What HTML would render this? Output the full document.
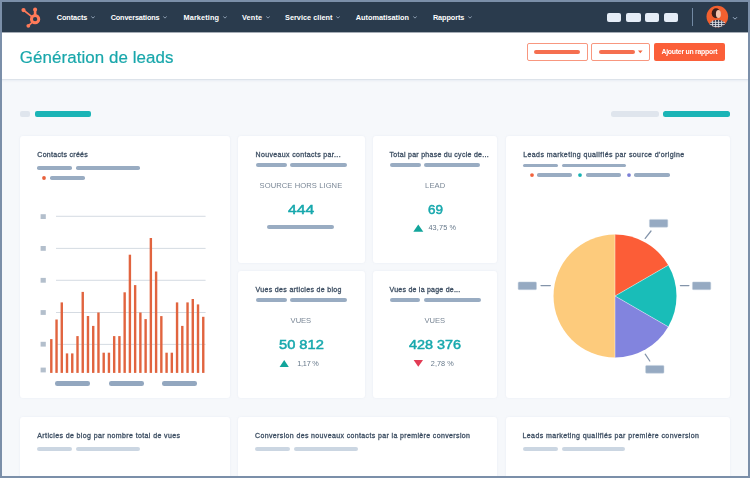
<!DOCTYPE html>
<html lang="fr">
<head>
<meta charset="utf-8">
<title>Génération de leads</title>
<style>
*{box-sizing:border-box;margin:0;padding:0}
html,body{width:750px;height:478px;overflow:hidden;background:#f6f8fb}
body{font-family:"Liberation Sans",sans-serif;position:relative;color:#33475b}
.abs{position:absolute}
#content{position:absolute;left:0;top:0;width:750px;height:478px;overflow:hidden;filter:blur(.4px)}
#nav{position:absolute;left:0;top:0;width:750px;height:33px;background:linear-gradient(to bottom,#2a3b4d 0,#2a3b4d 32px,#a5adb6 32px,#a5adb6 33px)}
#head{position:absolute;left:0;top:33px;width:750px;height:47px;background:#fff;border-bottom:1px solid #dde3ea;box-shadow:0 1px 2px rgba(203,214,226,.35)}
.t{position:absolute;white-space:nowrap}
.nv{color:#fff;font-weight:bold}
.ttl{color:#19a7ab;-webkit-text-stroke:.2px #19a7ab}
.ct{color:#3f5064;-webkit-text-stroke:.3px #3f5064}
.lbl{color:#7a8796}
.num{color:#17a8ad;-webkit-text-stroke:.5px #17a8ad}
.pct{color:#66788a}
.btn{color:#fff;font-weight:bold}
.bar{position:absolute}
.card{position:absolute;background:#fff;border-radius:3px;box-shadow:0 0 2px rgba(200,210,225,.3)}
#frame{position:absolute;left:0;top:0;width:750px;height:478px;border:2px solid #7b8fa9;border-bottom-width:2.2px;pointer-events:none}
</style>
</head>
<body>
<div id="content">
<div id="nav"></div>
<div id="head"></div>
<svg class="abs" style="left:18px;top:4px" width="26" height="26" viewBox="18 4 26 26">
<g fill="none" stroke="#ff7a59" stroke-linecap="round">
<circle cx="35.1" cy="19.2" r="3.65" stroke-width="3"/>
<line x1="35.1" y1="14.5" x2="35.1" y2="10.2" stroke-width="2.6"/>
<line x1="31.8" y1="16.6" x2="24" y2="10.5" stroke-width="1.7"/>
<line x1="32.2" y1="22.4" x2="28.8" y2="25.4" stroke-width="1.7"/>
</g>
<circle cx="35.1" cy="9.6" r="2" fill="#ff7a59"/>
<circle cx="23.5" cy="10.1" r="2.1" fill="#ff7a59"/>
<circle cx="28.3" cy="25.8" r="1.9" fill="#ff7a59"/>
</svg>
<div class="t nv" id="nv0" style="left:56.70px;top:11.27px;font-size:7.30px;line-height:14.60px;letter-spacing:-0.074px;">Contacts</div><svg class="abs" style="left:90.0px;top:15.4px" width="6" height="5" viewBox="0 0 6 5"><path d="M1.3 1.5 L3 3.1 L4.7 1.5" fill="none" stroke="#98a9bd" stroke-width=".9"/></svg><div class="t nv" id="nv1" style="left:110.70px;top:11.27px;font-size:7.30px;line-height:14.60px;letter-spacing:-0.149px;">Conversations</div><svg class="abs" style="left:162.2px;top:15.4px" width="6" height="5" viewBox="0 0 6 5"><path d="M1.3 1.5 L3 3.1 L4.7 1.5" fill="none" stroke="#98a9bd" stroke-width=".9"/></svg><div class="t nv" id="nv2" style="left:183.50px;top:11.27px;font-size:7.30px;line-height:14.60px;letter-spacing:0.129px;">Marketing</div><svg class="abs" style="left:221.6px;top:15.4px" width="6" height="5" viewBox="0 0 6 5"><path d="M1.3 1.5 L3 3.1 L4.7 1.5" fill="none" stroke="#98a9bd" stroke-width=".9"/></svg><div class="t nv" id="nv3" style="left:242.00px;top:11.27px;font-size:7.30px;line-height:14.60px;letter-spacing:0.133px;">Vente</div><svg class="abs" style="left:264.6px;top:15.4px" width="6" height="5" viewBox="0 0 6 5"><path d="M1.3 1.5 L3 3.1 L4.7 1.5" fill="none" stroke="#98a9bd" stroke-width=".9"/></svg><div class="t nv" id="nv4" style="left:285.00px;top:11.27px;font-size:7.30px;line-height:14.60px;letter-spacing:0.034px;">Service client</div><svg class="abs" style="left:335.1px;top:15.4px" width="6" height="5" viewBox="0 0 6 5"><path d="M1.3 1.5 L3 3.1 L4.7 1.5" fill="none" stroke="#98a9bd" stroke-width=".9"/></svg><div class="t nv" id="nv5" style="left:355.80px;top:11.27px;font-size:7.30px;line-height:14.60px;letter-spacing:0.007px;">Automatisation</div><svg class="abs" style="left:411.6px;top:15.4px" width="6" height="5" viewBox="0 0 6 5"><path d="M1.3 1.5 L3 3.1 L4.7 1.5" fill="none" stroke="#98a9bd" stroke-width=".9"/></svg><div class="t nv" id="nv6" style="left:432.90px;top:11.27px;font-size:7.30px;line-height:14.60px;letter-spacing:-0.090px;">Rapports</div><svg class="abs" style="left:466.9px;top:15.4px" width="6" height="5" viewBox="0 0 6 5"><path d="M1.3 1.5 L3 3.1 L4.7 1.5" fill="none" stroke="#98a9bd" stroke-width=".9"/></svg>
<div class="abs" style="left:607.1px;top:12.8px;width:14.3px;height:9.2px;border-radius:2px;background:#e5edf7"></div><div class="abs" style="left:626.3px;top:12.8px;width:14.3px;height:9.2px;border-radius:2px;background:#e5edf7"></div><div class="abs" style="left:645.0px;top:12.8px;width:14.3px;height:9.2px;border-radius:2px;background:#e5edf7"></div><div class="abs" style="left:664.0px;top:12.8px;width:14.3px;height:9.2px;border-radius:2px;background:#e5edf7"></div><div class="abs" style="left:692px;top:8px;width:1px;height:17.5px;background:#7289a3"></div><svg class="abs" style="left:704px;top:3px" width="28" height="28" viewBox="704 3 28 28">
<defs><clipPath id="av"><circle cx="717.3" cy="16.6" r="10.8"/></clipPath></defs>
<circle cx="717.3" cy="16.6" r="10.8" fill="#f2602f"/>
<g clip-path="url(#av)">
<ellipse cx="716" cy="13.2" rx="4.3" ry="5" fill="#3a1f1c"/>
<ellipse cx="718.4" cy="14" rx="2.5" ry="4" fill="#f0c3ae"/>
<path d="M709 29 C709 22 712.5 20 717.5 20 C722.6 20 726 22 726 29 Z" fill="#2a3248"/>
<g stroke="#eef1f6" stroke-width=".9" opacity=".92"><path d="M710.5 22.3 H725 M709 24.6 H727 M709 26.6 H727 M712.6 20.5 V28 M715.6 20 V28 M718.6 20 V28 M721.6 20.5 V28"/></g>
</g>
</svg>
<svg class="abs" style="left:732.2px;top:16.2px" width="6" height="5" viewBox="0 0 6 5"><path d="M1 1.2 L3 3.2 L5 1.2" fill="none" stroke="#9fb2c9" stroke-width="1"/></svg>
<div class="t ttl" id="ttl" style="left:19.80px;top:40.54px;font-size:16.90px;line-height:33.80px;letter-spacing:0.087px;">Génération de leads</div><div class="abs" style="left:526.5px;top:43.2px;width:61.5px;height:17.6px;border:1px solid #f8977f;border-radius:2px;background:#fff"></div><div class="bar" style="left:534.0px;top:49.7px;width:46.0px;height:4.4px;border-radius:2.2px;background:#f56f50;"></div><div class="abs" style="left:591px;top:43.2px;width:58.7px;height:17.6px;border:1px solid #f8977f;border-radius:2px;background:#fff"></div><div class="bar" style="left:599.0px;top:49.7px;width:36.2px;height:4.4px;border-radius:2.2px;background:#f56f50;"></div><svg class="abs" style="left:636.5px;top:50px" width="7" height="4" viewBox="0 0 7 4"><path d="M1 0.6 H5.6 L3.3 3.2 Z" fill="#f2663f"/></svg><div class="abs" style="left:654.4px;top:43.2px;width:70.4px;height:17.4px;border-radius:2px;background:#fb5f39"></div><div class="t btn" id="btn" style="left:661.50px;top:45.01px;font-size:6.90px;line-height:13.80px;letter-spacing:-0.258px;">Ajouter un rapport</div>
<div class="bar" style="left:19.5px;top:110.9px;width:10.9px;height:6.1px;border-radius:3.0px;background:#dfe5ed;border-radius:2px;"></div><div class="bar" style="left:35.1px;top:110.9px;width:56.4px;height:6.1px;border-radius:3.0px;background:#1bb4b6;border-radius:2px;"></div><div class="bar" style="left:611.0px;top:110.9px;width:47.5px;height:6.1px;border-radius:3.0px;background:#dfe5ed;border-radius:2.5px;"></div><div class="bar" style="left:662.9px;top:110.9px;width:67.4px;height:6.1px;border-radius:3.0px;background:#1bb4b6;border-radius:2.5px;"></div>
<div class="card" style="left:20.0px;top:136.0px;width:209.5px;height:262.0px"></div><div class="card" style="left:238.0px;top:136.0px;width:127.0px;height:127.0px"></div><div class="card" style="left:373.0px;top:136.0px;width:124.3px;height:127.0px"></div><div class="card" style="left:238.0px;top:271.0px;width:127.0px;height:127.0px"></div><div class="card" style="left:373.0px;top:271.0px;width:124.3px;height:127.0px"></div><div class="card" style="left:506.0px;top:136.0px;width:224.0px;height:262.0px"></div><div class="card" style="left:20.0px;top:417.3px;width:209.5px;height:62.7px"></div><div class="card" style="left:238.0px;top:417.3px;width:259.3px;height:62.7px"></div><div class="card" style="left:506.0px;top:417.3px;width:224.0px;height:62.7px"></div>
<div class="t ct" id="c1" style="left:37.30px;top:148.47px;font-size:7.00px;line-height:14.00px;letter-spacing:0.293px;">Contacts créés</div><div class="bar" style="left:36.9px;top:166.0px;width:35.1px;height:3.7px;border-radius:1.8px;background:#99acc2;"></div><div class="bar" style="left:76.0px;top:166.0px;width:64.0px;height:3.7px;border-radius:1.8px;background:#99acc2;"></div><svg class="abs" style="left:40.3px;top:173.7px" width="8" height="8" viewBox="0 0 8 8"><circle cx="4" cy="4" r="1.9" fill="#e8613c"/></svg><div class="bar" style="left:49.7px;top:176.1px;width:35.1px;height:3.5px;border-radius:1.8px;background:#99acc2;"></div><svg class="abs" style="left:0;top:200px" width="240" height="195" viewBox="0 200 240 195"><line x1="56" x2="205.6" y1="216.3" y2="216.3" stroke="#c3ccd6" stroke-width=".7"/><line x1="56" x2="205.6" y1="248.4" y2="248.4" stroke="#c3ccd6" stroke-width=".7"/><line x1="56" x2="205.6" y1="280.3" y2="280.3" stroke="#c3ccd6" stroke-width=".7"/><line x1="56" x2="205.6" y1="312.5" y2="312.5" stroke="#c3ccd6" stroke-width=".7"/><line x1="56" x2="205.6" y1="344.4" y2="344.4" stroke="#c3ccd6" stroke-width=".7"/><rect x="40.6" y="214.2" width="5.2" height="4.8" fill="#b3bfcc"/><rect x="40.6" y="246.0" width="5.2" height="4.8" fill="#b3bfcc"/><rect x="40.6" y="277.9" width="5.2" height="4.8" fill="#b3bfcc"/><rect x="40.6" y="310.1" width="5.2" height="4.8" fill="#b3bfcc"/><rect x="40.6" y="341.8" width="5.2" height="4.8" fill="#b3bfcc"/><rect x="40.6" y="367.6" width="5.2" height="4.8" fill="#b3bfcc"/><g fill="#e1643f"><rect x="50.10" y="339.1" width="2.4" height="33.8"/><rect x="55.34" y="319.5" width="2.4" height="53.4"/><rect x="60.58" y="302.4" width="2.4" height="70.5"/><rect x="65.82" y="353.4" width="2.4" height="19.5"/><rect x="71.06" y="353.4" width="2.4" height="19.5"/><rect x="76.30" y="336.1" width="2.4" height="36.8"/><rect x="81.54" y="291.9" width="2.4" height="81.0"/><rect x="86.78" y="316.0" width="2.4" height="56.9"/><rect x="92.02" y="325.9" width="2.4" height="47.0"/><rect x="97.26" y="312.5" width="2.4" height="60.4"/><rect x="102.50" y="352.7" width="2.4" height="20.2"/><rect x="107.74" y="352.7" width="2.4" height="20.2"/><rect x="112.98" y="336.1" width="2.4" height="36.8"/><rect x="118.22" y="336.1" width="2.4" height="36.8"/><rect x="123.46" y="292.3" width="2.4" height="80.6"/><rect x="128.70" y="254.7" width="2.4" height="118.2"/><rect x="133.94" y="285.1" width="2.4" height="87.8"/><rect x="139.18" y="312.5" width="2.4" height="60.4"/><rect x="144.42" y="319.1" width="2.4" height="53.8"/><rect x="149.66" y="238.0" width="2.4" height="134.9"/><rect x="154.90" y="271.5" width="2.4" height="101.4"/><rect x="160.14" y="316.1" width="2.4" height="56.8"/><rect x="165.38" y="352.7" width="2.4" height="20.2"/><rect x="170.62" y="352.7" width="2.4" height="20.2"/><rect x="175.86" y="302.4" width="2.4" height="70.5"/><rect x="181.10" y="325.9" width="2.4" height="47.0"/><rect x="186.34" y="302.4" width="2.4" height="70.5"/><rect x="191.58" y="299.0" width="2.4" height="73.9"/><rect x="196.82" y="304.4" width="2.4" height="68.5"/><rect x="202.06" y="316.8" width="2.4" height="56.1"/></g></svg><div class="bar" style="left:54.8px;top:381.2px;width:35.4px;height:4.5px;border-radius:2.2px;background:#93a7bf;"></div><div class="bar" style="left:108.5px;top:381.2px;width:35.2px;height:4.5px;border-radius:2.2px;background:#93a7bf;"></div><div class="bar" style="left:162.0px;top:381.2px;width:35.0px;height:4.5px;border-radius:2.2px;background:#93a7bf;"></div>
<div class="t ct" id="s1t" style="left:255.60px;top:147.67px;font-size:7.00px;line-height:14.00px;letter-spacing:0.346px;">Nouveaux contacts par...</div><div class="bar" style="left:255.8px;top:163.1px;width:30.8px;height:4.1px;border-radius:2.0px;background:#99acc2;"></div><div class="bar" style="left:290.0px;top:163.1px;width:57.0px;height:4.1px;border-radius:2.0px;background:#99acc2;"></div><div class="t lbl" id="s1l" style="left:259.55px;top:177.97px;font-size:7.60px;line-height:15.20px;letter-spacing:0.079px;">SOURCE HORS LIGNE</div><div class="t num" id="s1n" style="left:287.85px;top:196.56px;font-size:13.40px;line-height:26.80px;transform-origin:0 50%;transform:scaleX(1.1681);">444</div><div class="bar" style="left:267.2px;top:224.7px;width:67.3px;height:4.3px;border-radius:2.2px;background:#99acc2;"></div><div class="t ct" id="s2t" style="left:389.60px;top:147.67px;font-size:7.00px;line-height:14.00px;letter-spacing:0.274px;">Total par phase du cycle de...</div><div class="bar" style="left:389.6px;top:163.1px;width:31.0px;height:4.1px;border-radius:2.0px;background:#99acc2;"></div><div class="bar" style="left:424.0px;top:163.1px;width:56.4px;height:4.1px;border-radius:2.0px;background:#99acc2;"></div><div class="t lbl" id="s2l" style="left:425.10px;top:177.97px;font-size:7.60px;line-height:15.20px;letter-spacing:0.119px;">LEAD</div><div class="t num" id="s2n" style="left:427.70px;top:196.56px;font-size:13.40px;line-height:26.80px;transform-origin:0 50%;transform:scaleX(1.0063);">69</div><div class="t ct" id="s3t" style="left:255.50px;top:282.67px;font-size:7.00px;line-height:14.00px;letter-spacing:0.335px;">Vues des articles de blog</div><div class="bar" style="left:255.5px;top:298.1px;width:31.4px;height:4.1px;border-radius:2.0px;background:#99acc2;"></div><div class="bar" style="left:289.8px;top:298.1px;width:57.2px;height:4.1px;border-radius:2.0px;background:#99acc2;"></div><div class="t lbl" id="s3l" style="left:290.60px;top:312.97px;font-size:7.60px;line-height:15.20px;letter-spacing:-0.029px;">VUES</div><div class="t num" id="s3n" style="left:278.50px;top:331.56px;font-size:13.40px;line-height:26.80px;transform-origin:0 50%;transform:scaleX(1.0935);">50 812</div><div class="t ct" id="s4t" style="left:389.60px;top:282.67px;font-size:7.00px;line-height:14.00px;letter-spacing:0.235px;">Vues de la page de...</div><div class="bar" style="left:389.6px;top:298.1px;width:30.8px;height:4.1px;border-radius:2.0px;background:#99acc2;"></div><div class="bar" style="left:423.8px;top:298.1px;width:56.9px;height:4.1px;border-radius:2.0px;background:#99acc2;"></div><div class="t lbl" id="s4l" style="left:424.55px;top:312.97px;font-size:7.60px;line-height:15.20px;letter-spacing:-0.062px;">VUES</div><div class="t num" id="s4n" style="left:408.80px;top:331.56px;font-size:13.40px;line-height:26.80px;transform-origin:0 50%;transform:scaleX(1.0742);">428 376</div><svg class="abs" style="left:0;top:0" width="750" height="478" viewBox="0 0 750 478"><path d="M418.3 224.4 L423.3 231.7 L413.3 231.7 Z" fill="#12a59b"/></svg><div class="t pct" id="p1" style="left:428.40px;top:221.07px;font-size:7.30px;line-height:14.60px;letter-spacing:0.136px;">43,75 %</div><svg class="abs" style="left:0;top:0" width="750" height="478" viewBox="0 0 750 478"><path d="M284.2 360.0 L288.8 366.9 L279.6 366.9 Z" fill="#12a59b"/></svg><div class="t pct" id="p2" style="left:297.20px;top:356.57px;font-size:7.30px;line-height:14.60px;letter-spacing:-0.224px;">1,17 %</div><svg class="abs" style="left:0;top:0" width="750" height="478" viewBox="0 0 750 478"><path d="M413.6 360.0 L423.0 360.0 L418.3 366.8 Z" fill="#e23c55"/></svg><div class="t pct" id="p3" style="left:430.80px;top:356.57px;font-size:7.30px;line-height:14.60px;letter-spacing:0.056px;">2,78 %</div>
<div class="t ct" id="c4" style="left:523.20px;top:147.67px;font-size:7.00px;line-height:14.00px;letter-spacing:0.411px;">Leads marketing qualifiés par source d'origine</div><div class="bar" style="left:523.2px;top:163.6px;width:34.4px;height:3.9px;border-radius:2.0px;background:#99acc2;"></div><div class="bar" style="left:562.0px;top:163.6px;width:63.5px;height:3.9px;border-radius:2.0px;background:#99acc2;"></div><svg class="abs" style="left:527.5px;top:171px" width="8" height="8" viewBox="0 0 8 8"><circle cx="4" cy="4.1" r="1.9" fill="#f2633d"/></svg><div class="bar" style="left:536.6px;top:173.3px;width:35.5px;height:3.7px;border-radius:1.8px;background:#99acc2;"></div><svg class="abs" style="left:576.4px;top:171px" width="8" height="8" viewBox="0 0 8 8"><circle cx="4" cy="4.1" r="1.9" fill="#17b3b3"/></svg><div class="bar" style="left:585.5px;top:173.3px;width:35.2px;height:3.7px;border-radius:1.8px;background:#99acc2;"></div><svg class="abs" style="left:625.1px;top:171px" width="8" height="8" viewBox="0 0 8 8"><circle cx="4" cy="4.1" r="1.9" fill="#7b7fd6"/></svg><div class="bar" style="left:634.4px;top:173.3px;width:35.5px;height:3.7px;border-radius:1.8px;background:#99acc2;"></div><svg class="abs" style="left:506px;top:200px" width="224" height="190" viewBox="506 200 224 190"><path d="M615.0 296.0 L615.00 357.50 A61.5 61.5 0 0 1 615.00 234.50 Z" fill="#fdcb7c"/><path d="M615.0 296.0 L615.00 234.50 A61.5 61.5 0 0 1 668.26 265.25 Z" fill="#fc5d37"/><path d="M615.0 296.0 L668.26 265.25 A61.5 61.5 0 0 1 668.26 326.75 Z" fill="#19bdb8"/><path d="M615.0 296.0 L668.26 326.75 A61.5 61.5 0 0 1 615.00 357.50 Z" fill="#8284de"/><g stroke="#fff" stroke-width=".6" opacity=".7"><line x1="615" y1="296" x2="615.0" y2="234.5"/><line x1="615" y1="296" x2="668.3" y2="265.2"/><line x1="615" y1="296" x2="668.3" y2="326.8"/><line x1="615" y1="296" x2="615.0" y2="357.5"/></g><g stroke="#8394aa" stroke-width="1.25" stroke-linecap="round"><line x1="645.2" y1="238.4" x2="651" y2="231"/><line x1="680.4" y1="285.6" x2="688.9" y2="285.6"/><line x1="541" y1="285.6" x2="550.3" y2="285.6"/><line x1="645.2" y1="354.2" x2="649.8" y2="361"/></g><rect x="649.4" y="219.4" width="18.4" height="7.8" rx="1" fill="#96aac2" stroke="#c5d0de" stroke-width=".5"/><rect x="692.4" y="281.9" width="18.4" height="7.8" rx="1" fill="#96aac2" stroke="#c5d0de" stroke-width=".5"/><rect x="518.1" y="281.9" width="18.4" height="7.8" rx="1" fill="#96aac2" stroke="#c5d0de" stroke-width=".5"/><rect x="645.6" y="365.4" width="18.4" height="7.8" rx="1" fill="#96aac2" stroke="#c5d0de" stroke-width=".5"/></svg>
<div class="t ct" id="b1" style="left:37.30px;top:428.77px;font-size:7.00px;line-height:14.00px;letter-spacing:0.386px;">Articles de blog par nombre total de vues</div><div class="bar" style="left:37.3px;top:447.4px;width:35.0px;height:4.0px;border-radius:2.0px;background:#cbd6e2;"></div><div class="bar" style="left:75.7px;top:447.4px;width:64.3px;height:4.0px;border-radius:2.0px;background:#cbd6e2;"></div><div class="t ct" id="b2" style="left:255.00px;top:428.77px;font-size:7.00px;line-height:14.00px;letter-spacing:0.366px;">Conversion des nouveaux contacts par la première conversion</div><div class="bar" style="left:255.0px;top:447.4px;width:35.0px;height:4.0px;border-radius:2.0px;background:#cbd6e2;"></div><div class="bar" style="left:294.0px;top:447.4px;width:63.5px;height:4.0px;border-radius:2.0px;background:#cbd6e2;"></div><div class="t ct" id="b3" style="left:522.50px;top:428.77px;font-size:7.00px;line-height:14.00px;letter-spacing:0.410px;">Leads marketing qualifiés par première conversion</div><div class="bar" style="left:522.5px;top:447.4px;width:35.0px;height:4.0px;border-radius:2.0px;background:#cbd6e2;"></div><div class="bar" style="left:561.5px;top:447.4px;width:63.5px;height:4.0px;border-radius:2.0px;background:#cbd6e2;"></div>
</div>
<div id="frame"></div>
</body>
</html>
